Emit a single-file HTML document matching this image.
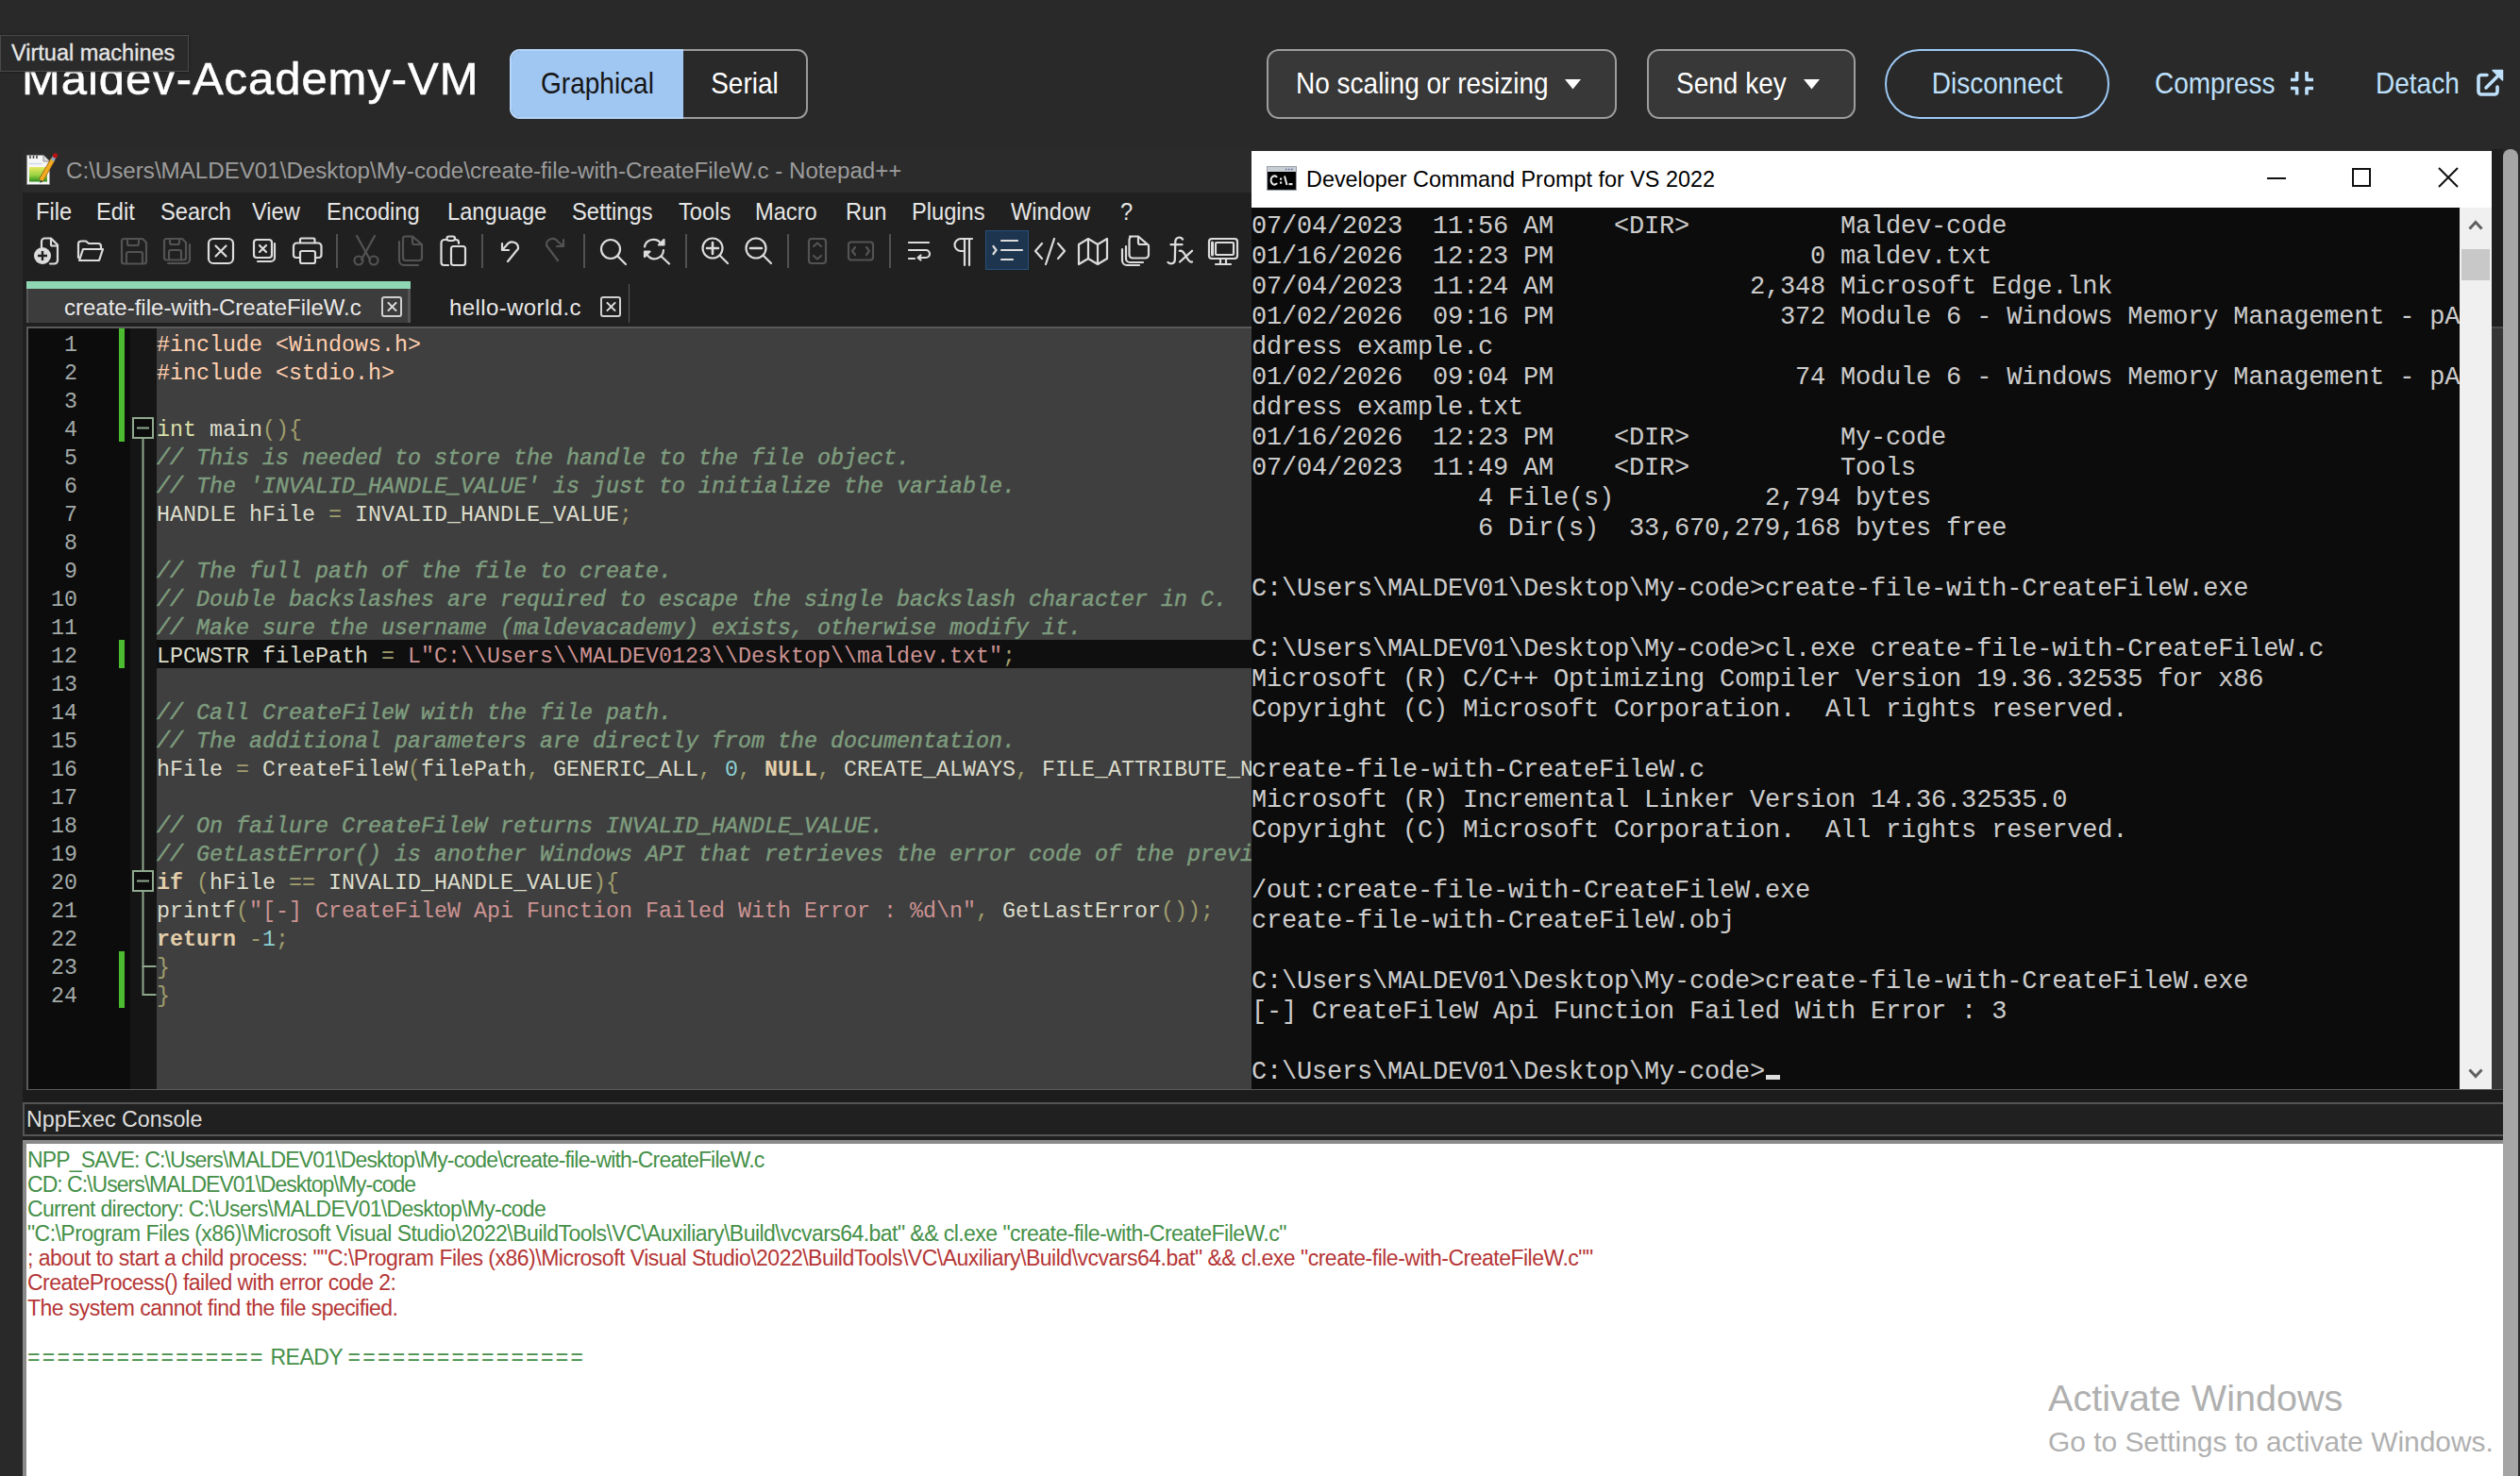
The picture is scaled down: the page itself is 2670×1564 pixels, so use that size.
<!DOCTYPE html>
<html><head><meta charset="utf-8">
<style>
*{margin:0;padding:0;box-sizing:border-box}
html,body{width:2670px;height:1564px;overflow:hidden;background:#292929;font-family:"Liberation Sans",sans-serif}
.a{position:absolute}
.mono{font-family:"Liberation Mono",monospace}
pre{font-family:"Liberation Mono",monospace;margin:0}
.menu span{position:absolute;top:0;transform:scaleX(.91);transform-origin:0 0}
.eq{letter-spacing:2.3px}
.xb{width:22px;height:22px;border:2px solid #cfcfcf;border-radius:3px}
.xb:before,.xb:after{content:"";position:absolute;left:3px;top:8px;width:13px;height:2px;background:#e0e0e0;transform:rotate(45deg)}
.xb:after{transform:rotate(-45deg)}
.lnum{font-size:23.3px;line-height:30px;color:#a3aaa8;text-align:right}
.code{font-size:23.33px;line-height:30px;color:#dcdccc;white-space:pre}
.code .p{color:#ffcfaf}.code .t{color:#d8dea8}.code .k{color:#e3ceab;font-weight:bold}
.code .n{color:#8cd0d3}.code .s{color:#cc9393}.code .o{color:#9f9d6d}.code .c{color:#7e9c7e;font-style:italic;-webkit-text-stroke:0.45px #7e9c7e}
.con{font-size:27px;letter-spacing:-0.2px;line-height:32px;color:#cccccc;white-space:pre}
.nx{font-family:"Liberation Sans",sans-serif;font-size:23px;letter-spacing:-0.55px;line-height:26.1px;white-space:pre}
.nx .g{color:#459048}.nx .r{color:#b53636}
.ht{font-size:30.5px;transform:scaleX(.918);transform-origin:0 50%;white-space:nowrap}
#title{-webkit-text-stroke:0.6px #fff}
</style></head><body>
<!-- header -->
<div class="a" id="title" style="left:23px;top:53px;font-size:49px;letter-spacing:0.95px;color:#fff;white-space:nowrap;line-height:60px">Maldev-Academy-VM</div>
<div class="a" id="tip" style="left:0;top:37px;width:200px;height:39px;background:#2a2a2a;border:1px solid #4a4a4a;box-shadow:0 0 2px #111;color:#e6e6e6;-webkit-text-stroke:0.3px #e6e6e6;font-size:23.5px;line-height:37px;padding-left:11px;white-space:nowrap">Virtual machines</div>

<div class="a" style="left:540px;top:52px;width:316px;height:74px;border:2px solid #9a9a9a;border-radius:11px;overflow:hidden;background:#292929">
  <div class="a" style="left:0;top:0;width:182px;height:70px;background:#a0c6f2"></div>
  <div class="a ht" style="left:0;top:0;width:182px;height:70px;color:#151515;line-height:69px;text-align:center;transform-origin:50% 50%">Graphical</div>
  <div class="a ht" style="left:182px;top:0;width:130px;height:70px;color:#fff;line-height:69px;text-align:center;transform-origin:50% 50%">Serial</div>
</div>
<div class="a" style="left:540px;top:52px;width:184px;height:74px;border:2px solid #b4d6fa;border-right:none;border-radius:11px 0 0 11px"></div>

<div class="a" style="left:1342px;top:52px;width:371px;height:74px;border:2px solid #9d9d9d;border-radius:13px;background:#383838"></div>
<div class="a ht" style="left:1373px;top:52px;line-height:73px;color:#fff">No scaling or resizing</div>
<svg class="a" style="left:1658px;top:84px" width="18" height="11"><path d="M0 0 H17 L8.5 10.5 Z" fill="#fff"/></svg>

<div class="a" style="left:1745px;top:52px;width:221px;height:74px;border:2px solid #9d9d9d;border-radius:13px;background:#383838"></div>
<div class="a ht" style="left:1776px;top:52px;line-height:73px;color:#fff">Send key</div>
<svg class="a" style="left:1911px;top:84px" width="18" height="11"><path d="M0 0 H17 L8.5 10.5 Z" fill="#fff"/></svg>

<div class="a" style="left:1997px;top:52px;width:238px;height:74px;border:2px solid #9cc8f5;border-radius:37px"></div>
<div class="a ht" style="left:1997px;top:52px;width:238px;line-height:73px;color:#bee0fb;text-align:center;transform-origin:50% 50%">Disconnect</div>

<div class="a ht" style="left:2283px;top:52px;line-height:73px;color:#bee0fb">Compress</div>
<svg class="a" style="left:2425px;top:74px" width="30" height="30" viewBox="2425 74 30 30"><path d="M2433.6 76 V84.5 H2427 M2444 76 V84.5 H2451 M2427 93.5 H2433.6 V100.5 M2451 93.5 H2444 V100.5" fill="none" stroke="#bee0fb" stroke-width="3.6" stroke-linejoin="round"/></svg>
<div class="a ht" style="left:2517px;top:52px;line-height:73px;color:#bee0fb">Detach</div>
<svg class="a" style="left:2620px;top:70px" width="36" height="36" viewBox="2620 70 36 36"><path d="M2635 79.5 H2629 a3 3 0 0 0 -3 3 V97 a3 3 0 0 0 3 3 H2643 a3 3 0 0 0 3 -3 V92" fill="none" stroke="#bee0fb" stroke-width="3.6" stroke-linecap="round"/><path d="M2634 93 L2646 81" stroke="#bee0fb" stroke-width="3.6" stroke-linecap="round"/><path d="M2641 74.5 H2651.5 V85 Z" fill="#bee0fb" stroke="#bee0fb" stroke-width="1.5" stroke-linejoin="round"/></svg>

<!-- Notepad++ window -->
<div class="a" style="left:24px;top:158px;width:2628px;height:46px;background:#2b2b2b"></div>
<div class="a" style="left:24px;top:204px;width:2628px;height:1360px;background:#202020"></div>
<!-- npp icon -->
<svg class="a" style="left:26px;top:161px" width="38" height="38" viewBox="26 161 38 38">
 <defs><linearGradient id="gr" x1="0" y1="0" x2="0" y2="1"><stop offset="0" stop-color="#e6e860"/><stop offset="0.55" stop-color="#9bd443"/><stop offset="1" stop-color="#2b8a1f"/></linearGradient></defs>
 <path d="M28.5 164.5 H46 L52.5 171 V195.5 H28.5 Z" fill="#f6f6f6" stroke="#8c8c8c" stroke-width="1"/>
 <path d="M46 164.5 V171 H52.5" fill="#dcdcdc" stroke="#8c8c8c" stroke-width="1"/>
 <path d="M32 165 v3 M35.5 165 v3 M39 165 v3" stroke="#444" stroke-width="1.6"/>
 <path d="M31 173.5 H45" stroke="#c8d8e8" stroke-width="1.2"/>
 <rect x="31" y="177" width="19" height="15.5" fill="url(#gr)"/>
 <path d="M43.5 191 L56 169" stroke="#8a5a10" stroke-width="5.5" stroke-linecap="butt"/>
 <path d="M43.5 191 L56 169" stroke="#f2aa22" stroke-width="4" stroke-linecap="butt"/>
 <path d="M55.5 170 L58 165.5" stroke="#8fa8c0" stroke-width="4"/>
 <circle cx="58.5" cy="164.8" r="2.6" fill="#b81212"/>
 <path d="M42 194 L43.5 191 L45.5 192.2 Z" fill="#333"/>
</svg>
<div class="a" id="npptitle" style="left:70px;top:158px;height:46px;line-height:46px;font-size:24.15px;color:#9c9c9c;white-space:nowrap">C:\Users\MALDEV01\Desktop\My-code\create-file-with-CreateFileW.c - Notepad++</div>
<!-- menu -->
<div class="a menu" style="top:204px;height:40px;line-height:40px;font-size:26px;color:#e6e6e6;white-space:nowrap">
<span style="left:38px">File</span><span style="left:102px">Edit</span><span style="left:170px">Search</span><span style="left:267px">View</span><span style="left:346px">Encoding</span><span style="left:474px">Language</span><span style="left:606px">Settings</span><span style="left:719px">Tools</span><span style="left:800px">Macro</span><span style="left:896px">Run</span><span style="left:966px">Plugins</span><span style="left:1071px">Window</span><span style="left:1187px">?</span>
</div>
<!-- toolbar placeholder -->
<svg class="a" style="left:0;top:236px" width="1326" height="56" viewBox="0 236 1326 56">
<g fill="none" stroke="#dcdcdc" stroke-width="2.2" stroke-linejoin="round" stroke-linecap="round">
 <!-- new -->
 <path d="M44 262 V256 a3.5 3.5 0 0 1 3.5 -3.5 H54 L61 259.5 V276 a3.5 3.5 0 0 1 -3.5 3.5 H53"/>
 <path d="M54 253 V259 a1.5 1.5 0 0 0 1.5 1.5 H61"/>
 <!-- open -->
 <path d="M83 273 V258.5 a3 3 0 0 1 3 -3 H91 l3 2.5 H104 a3 3 0 0 1 3 3 V263"/>
 <path d="M84 276 L88 264 H109 L105 276 Z"/>
 <!-- close -->
 <rect x="221" y="253" width="26" height="26" rx="5"/>
 <path d="M228.5 260.5 L239.5 271.5 M239.5 260.5 L228.5 271.5"/>
 <!-- close all -->
 <rect x="269" y="254" width="19" height="19" rx="3"/>
 <path d="M275 260 L282 267 M282 260 L275 267"/>
 <path d="M291 258 V273 a4 4 0 0 1 -4 4 H273"/>
 <!-- print -->
 <path d="M318 257 V254 a1.5 1.5 0 0 1 1.5 -1.5 H332 a1.5 1.5 0 0 1 1.5 1.5 V257"/>
 <path d="M318 273 H314 a3 3 0 0 1 -3 -3 V261 a3.5 3.5 0 0 1 3.5 -3.5 H337 a3.5 3.5 0 0 1 3.5 3.5 V270 a3 3 0 0 1 -3 3 H334"/>
 <rect x="318" y="266" width="16" height="13" rx="2"/>
 <!-- paste -->
 <path d="M474 254 h-3 a3.5 3.5 0 0 0 -3.5 3.5 V278 a3 3 0 0 0 3 3 H475"/>
 <path d="M486 258 V257 a3 3 0 0 0 -3 -3 h-1"/>
 <rect x="473.5" y="250.5" width="8.5" height="4.5" rx="2.2"/>
 <rect x="478" y="261" width="15" height="20" rx="2.5"/>
 <!-- undo -->
 <path d="M532 258 V265 H539"/>
 <path d="M533 264 L537 259.5 a6.5 6.5 0 0 1 12 4 L538 277"/>
 <!-- find -->
 <circle cx="647" cy="264" r="10"/>
 <path d="M654.5 271.5 L663 280"/>
 <!-- replace -->
 <path d="M683 261.5 A9.5 9.5 0 0 1 700.5 258.5"/>
 <path d="M698 259.5 L703.5 259.5 L703.5 254 Z" fill="#dcdcdc"/>
 <path d="M703 265 A9.5 9.5 0 0 1 686 270.5"/>
 <path d="M683 266.5 L688.5 266.5 L683 272 Z" fill="#dcdcdc"/>
 <path d="M700.5 271.5 L709 279.5"/>
 <!-- zoom in -->
 <circle cx="755" cy="263" r="10.5"/>
 <path d="M762.5 270.5 L771 279"/>
 <path d="M755 257 V269 M749 263 H761" stroke-width="2.6"/>
 <!-- zoom out -->
 <circle cx="801" cy="263" r="10.5"/>
 <path d="M808.5 270.5 L817 279"/>
 <path d="M795 263 H807" stroke-width="2.6"/>
 <!-- wrap -->
 <path d="M963 257 H984 M963 265 H981 a4 4 0 0 1 0 8 H973 M963 274 H969"/>
 <path d="M975.5 270.5 L972.5 273 L975.5 275.5"/>
 <!-- pilcrow -->
 <path d="M1022 253 V281 M1027 253 V281 M1030 253 H1018 a6 6 0 0 0 0 13 H1022"/>
 <!-- code -->
 <path d="M1104 258 L1097 266 L1104 274 M1121 258 L1128 266 L1121 274 M1117 253 L1108 280"/>
 <!-- map -->
 <path d="M1143 259 L1153 253 L1163 259 L1173 253 V274 L1163 280 L1153 274 L1143 280 Z M1153 253 V274 M1163 259 V280"/>
 <!-- doc list -->
 <path d="M1197 250.5 H1206 L1217 260 V270 a3.5 3.5 0 0 1 -3.5 3.5 H1200 a3.5 3.5 0 0 1 -3.5 -3.5 V254 a3.5 3.5 0 0 1 3.5 -3.5"/>
 <path d="M1206 251 V257 a2 2 0 0 0 2 2 H1216"/>
 <path d="M1193 261 V274 a4 4 0 0 0 4 4 H1211"/>
 <path d="M1189 264 V276 a5 5 0 0 0 5 5 H1207"/>
 <!-- monitor -->
 <rect x="1281" y="253" width="30" height="21" rx="3"/>
 <rect x="1288" y="257" width="19" height="13" rx="1"/>
 <path d="M1284.5 257 V270" stroke-width="3"/>
 <path d="M1293 274 V279 M1299 274 V279 M1288 280 H1304"/>
</g>
<g fill="none" stroke="#535353" stroke-width="2.2" stroke-linejoin="round" stroke-linecap="round">
 <!-- save -->
 <path d="M133 253 H151 L155 257 V277 a2.5 2.5 0 0 1 -2.5 2.5 H131.5 a2.5 2.5 0 0 1 -2.5 -2.5 V255.5 a2.5 2.5 0 0 1 2.5 -2.5"/>
 <path d="M135 253 V258 a2 2 0 0 0 2 2 H145 a2 2 0 0 0 2 -2 V253"/>
 <path d="M134 279 V269 a2 2 0 0 1 2 -2 H149 a2 2 0 0 1 2 2 V279"/>
 <!-- save all -->
 <path d="M177 253 H193 L197 257 V273 a2.5 2.5 0 0 1 -2.5 2.5 H176.5 a2.5 2.5 0 0 1 -2.5 -2.5 V255.5 a2.5 2.5 0 0 1 2.5 -2.5"/>
 <path d="M180 253 V257 a2 2 0 0 0 2 2 H188 a2 2 0 0 0 2 -2 V253"/>
 <path d="M179 275 V267 a2 2 0 0 1 2 -2 H190 a2 2 0 0 1 2 2 V275"/>
 <path d="M201 259 V275 a4 4 0 0 1 -4 4 H178"/>
 <!-- cut -->
 <path d="M378 250 L392 275 M397 250 L383 275"/>
 <circle cx="380" cy="276" r="4.5"/><circle cx="396" cy="276" r="4.5"/>
 <!-- copy -->
 <path d="M429 250.5 H437 L447 259 V273 a3 3 0 0 1 -3 3 H430 a3 3 0 0 1 -3 -3 V253 a2.5 2.5 0 0 1 2.5 -2.5"/>
 <path d="M437 251 V257 a2 2 0 0 0 2 2 H446"/>
 <path d="M423 256 V276 a5 5 0 0 0 5 5 H443"/>
 <!-- redo -->
 <path d="M597 254 V261 H590"/>
 <path d="M596 260 L591 256 a6.5 6.5 0 0 0 -12 4 L591 276"/>
 <!-- sync v -->
 <rect x="857" y="253" width="18" height="26" rx="3"/>
 <path d="M862 261 L866 257.5 L870 261 M862 271 L866 274.5 L870 271"/>
 <!-- sync h -->
 <rect x="899" y="256.5" width="26" height="19" rx="3"/>
 <path d="M906 262 L903 266 L906 270 M918 262 L921 266 L918 270"/>
</g>
<g fill="#dcdcdc" stroke="none">
 <circle cx="45" cy="271" r="9"/>
</g>
<path d="M45 266 V276 M40 271 H50" stroke="#202020" stroke-width="2.4"/>
<g stroke="#5e5e5e" stroke-width="1.6">
 <path d="M357 248 V284 M511 248 V284 M619 248 V284 M727 248 V284 M835 248 V284 M943 248 V284"/>
</g>
<rect x="1044.5" y="244.5" width="45" height="41" fill="#1e3550" stroke="#28507a" stroke-width="1"/>
<g fill="none" stroke="#dcdcdc" stroke-width="2.2" stroke-linecap="round">
 <path d="M1061 255 H1078 M1061 265 H1083 M1061 275 H1073"/>
 <path d="M1052.5 261 L1055.5 265 L1052.5 269"/>
</g>
<g fill="none" stroke="#dcdcdc" stroke-width="2.3" stroke-linecap="round">
 <path d="M1253 253.5 C1251 250.5 1245.5 251 1245.3 256 L1244.8 275.5 C1244.6 280 1239.5 280 1237.5 278"/>
 <path d="M1240.5 259.2 H1252.5"/>
 <path d="M1249.8 265.8 C1252 265 1253.5 266.5 1255 269 L1258 274 C1259.5 276.5 1261 278 1263 277.5"/>
 <path d="M1263 265.8 L1250 277.5"/>
</g>
</svg>

<!-- tabs -->
<div class="a" style="left:28px;top:298px;width:407px;height:8px;background:#8fd6b4"></div>
<div class="a" style="left:28px;top:306px;width:407px;height:36px;background:#3c3c3c;border-left:2px solid #555;border-right:3px solid #555"></div>
<div class="a" style="left:68px;top:308px;line-height:36px;font-size:24px;color:#e8e8e8;white-space:nowrap">create-file-with-CreateFileW.c</div>
<div class="a xb" style="left:404px;top:314px"></div>
<div class="a" style="left:476px;top:308px;line-height:36px;font-size:24px;color:#e8e8e8;letter-spacing:0.4px;white-space:nowrap">hello-world.c</div>
<div class="a xb" style="left:636px;top:314px"></div>
<div class="a" style="left:666px;top:301px;width:1px;height:41px;background:#5a5a5a"></div>
<!-- editor -->
<div class="a" style="left:28px;top:346px;width:2630px;height:810px;border:2px solid #5a5a5a;background:#3f3f3f;overflow:hidden">
  <div class="a" style="left:0;top:0;width:108px;height:806px;background:#0c0c0c"></div>
  <div class="a" style="left:108px;top:0;width:28px;height:806px;background:#151515"></div>
</div>
<div class="a" style="left:166px;top:678px;width:1160px;height:30px;background:#0f0f0f"></div>
<pre class="a lnum" style="left:30px;top:351px;width:52px"> 1
 2
 3
 4
 5
 6
 7
 8
 9
10
11
12
13
14
15
16
17
18
19
20
21
22
23
24</pre>
<div class="a" style="left:126px;top:348px;width:6px;height:120px;background:#4bbb2f"></div>
<div class="a" style="left:126px;top:678px;width:6px;height:30px;background:#4bbb2f"></div>
<div class="a" style="left:126px;top:1008px;width:6px;height:60px;background:#4bbb2f"></div>
<!-- fold markers -->
<svg class="a" style="left:137px;top:348px" width="29" height="720">
 <g stroke="#8ea98e" stroke-width="2" fill="none">
  <rect x="4" y="95" width="21" height="21" fill="#0b0b0b"/>
  <path d="M8 105.5h13"/>
  <path d="M14.5 116v459"/>
  <rect x="4" y="575" width="21" height="21" fill="#0b0b0b"/>
  <path d="M8 585.5h13"/>
  <path d="M14.5 596v80h14"/>
  <path d="M14.5 676v30h14"/>
 </g>
</svg>
<pre class="a code" style="left:166px;top:351px"><span class="p">#include &lt;Windows.h&gt;</span>
<span class="p">#include &lt;stdio.h&gt;</span>

<span class="t">int</span> main<span class="o">(){</span>
<span class="c">// This is needed to store the handle to the file object.</span>
<span class="c">// The 'INVALID_HANDLE_VALUE' is just to initialize the variable.</span>
HANDLE hFile <span class="o">=</span> INVALID_HANDLE_VALUE<span class="o">;</span>

<span class="c">// The full path of the file to create.</span>
<span class="c">// Double backslashes are required to escape the single backslash character in C.</span>
<span class="c">// Make sure the username (maldevacademy) exists, otherwise modify it.</span>
LPCWSTR filePath <span class="o">=</span> <span class="s">L"C:\\Users\\MALDEV0123\\Desktop\\maldev.txt"</span><span class="o">;</span>

<span class="c">// Call CreateFileW with the file path.</span>
<span class="c">// The additional parameters are directly from the documentation.</span>
hFile <span class="o">=</span> CreateFileW<span class="o">(</span>filePath<span class="o">,</span> GENERIC_ALL<span class="o">,</span> <span class="n">0</span><span class="o">,</span> <span class="k">NULL</span><span class="o">,</span> CREATE_ALWAYS<span class="o">,</span> FILE_ATTRIBUTE_NORMAL<span class="o">,</span> <span class="k">NULL</span><span class="o">);</span>

<span class="c">// On failure CreateFileW returns INVALID_HANDLE_VALUE.</span>
<span class="c">// GetLastError() is another Windows API that retrieves the error code of the previous operation.</span>
<span class="k">if</span> <span class="o">(</span>hFile <span class="o">==</span> INVALID_HANDLE_VALUE<span class="o">){</span>
printf<span class="o">(</span><span class="s">"[-] CreateFileW Api Function Failed With Error : %d\n"</span><span class="o">,</span> GetLastError<span class="o">());</span>
<span class="k">return</span> <span class="o">-</span><span class="n">1</span><span class="o">;</span>
<span class="o">}</span>
<span class="o">}</span></pre>

<!-- NppExec -->
<div class="a" style="left:24px;top:1155px;width:2628px;height:13px;background:#1c1c1c"></div>
<div class="a" style="left:24px;top:1168px;width:2628px;height:36px;background:#202020;border:2px solid #555;border-right:none"></div>
<div class="a" id="nxhead" style="left:28px;top:1169px;line-height:35px;font-size:23.3px;color:#dedede;white-space:nowrap">NppExec Console</div>
<div class="a" style="left:24px;top:1208px;width:2628px;height:4px;background:#8a8a8a"></div>
<div class="a" style="left:24px;top:1212px;width:2628px;height:352px;background:#fff"></div>
<div class="a" style="left:24px;top:1208px;width:4px;height:357px;background:#8a8a8a"></div>
<div class="a nx" style="left:29px;top:1216px"><div class="g" style="letter-spacing:-0.83px">NPP_SAVE: C:\Users\MALDEV01\Desktop\My-code\create-file-with-CreateFileW.c</div><div class="g" style="letter-spacing:-0.98px">CD: C:\Users\MALDEV01\Desktop\My-code</div><div class="g" style="letter-spacing:-0.7px">Current directory: C:\Users\MALDEV01\Desktop\My-code</div><div class="g" style="letter-spacing:-0.55px">"C:\Program Files (x86)\Microsoft Visual Studio\2022\BuildTools\VC\Auxiliary\Build\vcvars64.bat" &amp;&amp; cl.exe "create-file-with-CreateFileW.c"</div><div class="r" style="letter-spacing:-0.5px">; about to start a child process: ""C:\Program Files (x86)\Microsoft Visual Studio\2022\BuildTools\VC\Auxiliary\Build\vcvars64.bat" &amp;&amp; cl.exe "create-file-with-CreateFileW.c""</div><div class="r" style="letter-spacing:-0.55px">CreateProcess() failed with error code 2:</div><div class="r" style="letter-spacing:-0.55px">The system cannot find the file specified.</div><div class="g" style="letter-spacing:-0.55px">&nbsp;</div><div class="g" style="letter-spacing:-0.55px"><span class="eq">================</span> READY <span class="eq">================</span></div></div>
<div class="a" id="act1" style="left:2170px;top:1458px;font-size:39.6px;line-height:46px;color:#b0b0b0;white-space:nowrap">Activate Windows</div>
<div class="a" id="act2" style="left:2170px;top:1511px;font-size:29.9px;line-height:34px;color:#b0b0b0;white-space:nowrap">Go to Settings to activate Windows.</div>
<!-- cmd window -->
<div class="a" style="left:1326px;top:160px;width:1314px;height:60px;background:#fff"></div>
<svg class="a" style="left:1342px;top:176px" width="32" height="26" viewBox="1342 176 32 26">
 <rect x="1342.5" y="176.5" width="31" height="25" fill="#000" stroke="#9aa0a8" stroke-width="1.2"/>
 <rect x="1343" y="177" width="30" height="5" fill="#c9cdd4"/>
 <path d="M1362 179.5h1.5M1365 179.5h1.5M1368 179.5h1.5" stroke="#5a6a90" stroke-width="1.5"/>
 <path d="M1353 188 a3.6 4.6 0 1 0 0 6" fill="none" stroke="#e6e6e6" stroke-width="2.2"/>
 <rect x="1356" y="188.5" width="2.2" height="2.2" fill="#e6e6e6"/><rect x="1356" y="192.5" width="2.2" height="2.2" fill="#e6e6e6"/>
 <path d="M1361 186.5 L1363.5 196" stroke="#e6e6e6" stroke-width="2"/>
 <rect x="1365.5" y="194" width="4" height="2.2" fill="#e6e6e6"/>
</svg>
<div class="a" id="cmdtitle" style="left:1384px;top:160px;line-height:60px;font-size:23.4px;color:#000;white-space:nowrap">Developer Command Prompt for VS 2022</div>
<div class="a" style="left:2402px;top:188px;width:20px;height:2px;background:#111"></div>
<div class="a" style="left:2492px;top:178px;width:20px;height:20px;border:2px solid #111"></div>
<svg class="a" style="left:2583px;top:177px" width="22" height="22"><path d="M1 1L21 21M21 1L1 21" stroke="#111" stroke-width="2"/></svg>
<div class="a" style="left:1326px;top:220px;width:1280px;height:934px;background:#0c0c0c"></div>
<pre class="a con" style="left:1326px;top:224px">07/04/2023  11:56 AM    &lt;DIR&gt;          Maldev-code
01/16/2026  12:23 PM                 0 maldev.txt
07/04/2023  11:24 AM             2,348 Microsoft Edge.lnk
01/02/2026  09:16 PM               372 Module 6 - Windows Memory Management - pA
ddress example.c
01/02/2026  09:04 PM                74 Module 6 - Windows Memory Management - pA
ddress example.txt
01/16/2026  12:23 PM    &lt;DIR&gt;          My-code
07/04/2023  11:49 AM    &lt;DIR&gt;          Tools
               4 File(s)          2,794 bytes
               6 Dir(s)  33,670,279,168 bytes free

C:\Users\MALDEV01\Desktop\My-code&gt;create-file-with-CreateFileW.exe

C:\Users\MALDEV01\Desktop\My-code&gt;cl.exe create-file-with-CreateFileW.c
Microsoft (R) C/C++ Optimizing Compiler Version 19.36.32535 for x86
Copyright (C) Microsoft Corporation.  All rights reserved.

create-file-with-CreateFileW.c
Microsoft (R) Incremental Linker Version 14.36.32535.0
Copyright (C) Microsoft Corporation.  All rights reserved.

/out:create-file-with-CreateFileW.exe
create-file-with-CreateFileW.obj

C:\Users\MALDEV01\Desktop\My-code&gt;create-file-with-CreateFileW.exe
[-] CreateFileW Api Function Failed With Error : 3

C:\Users\MALDEV01\Desktop\My-code&gt;</pre>
<div class="a" style="left:1871px;top:1139px;width:15px;height:5px;background:#ddd"></div>
<div class="a" style="left:2606px;top:220px;width:34px;height:934px;background:#f0f0f0"></div>
<svg class="a" style="left:2614px;top:231px" width="18" height="14"><path d="M2.5 11.5L9 4.5L15.5 11.5" stroke="#606060" stroke-width="3" fill="none"/></svg>
<div class="a" style="left:2608px;top:264px;width:30px;height:33px;background:#c8c8c8"></div>
<svg class="a" style="left:2614px;top:1131px" width="18" height="14"><path d="M2.5 2.5L9 9.5L15.5 2.5" stroke="#606060" stroke-width="3" fill="none"/></svg>

<div class="a" style="left:2640px;top:158px;width:12px;height:188px;background:#1e1e1e"></div>
<div class="a" style="left:2640px;top:346px;width:12px;height:2px;background:#4a4a4a"></div>
<div class="a" style="left:2640px;top:348px;width:12px;height:806px;background:#353535"></div>
<!-- VM scrollbar -->
<div class="a" style="left:2652px;top:158px;width:16px;height:1420px;background:#a5a5a5;border-radius:8px 8px 0 0"></div>
</body></html>
